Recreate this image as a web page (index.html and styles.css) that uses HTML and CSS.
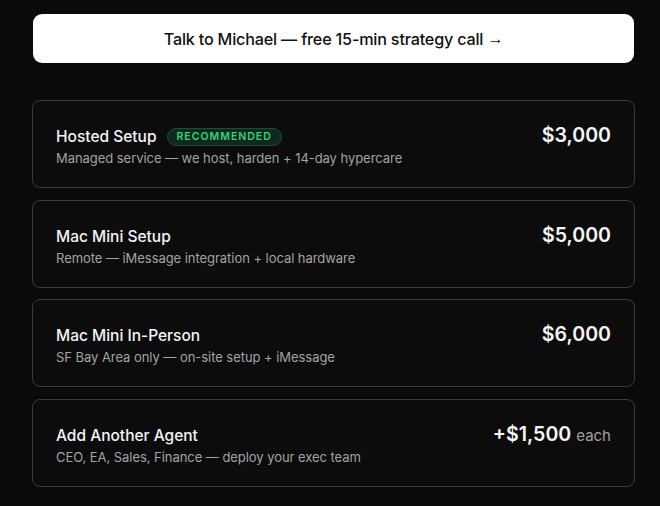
FILE: index.html
```html
<!DOCTYPE html>
<html>
<head>
<meta charset="utf-8">
<link rel="stylesheet" href="styles.css">
</head>
<body>
<main class="wrap">
  <a class="cta" href="#">Talk to Michael — free 15-min strategy call <span class="arrow">→</span></a>
  <div class="plans">
    <div class="card">
      <div class="info">
        <div class="title">Hosted Setup <span class="badge">RECOMMENDED</span></div>
        <div class="desc">Managed service — we host, harden + 14-day hypercare</div>
      </div>
      <div class="price">$3,000</div>
    </div>
    <div class="card">
      <div class="info">
        <div class="title">Mac Mini Setup</div>
        <div class="desc">Remote — iMessage integration + local hardware</div>
      </div>
      <div class="price">$5,000</div>
    </div>
    <div class="card">
      <div class="info">
        <div class="title">Mac Mini In-Person</div>
        <div class="desc">SF Bay Area only — on-site setup + iMessage</div>
      </div>
      <div class="price">$6,000</div>
    </div>
    <div class="card">
      <div class="info">
        <div class="title">Add Another Agent</div>
        <div class="desc">CEO, EA, Sales, Finance — deploy your exec team</div>
      </div>
      <div class="price">+$1,500 <span class="each">each</span></div>
    </div>
  </div>
</main>
</body>
</html>
```

FILE: styles.css
```css
* { box-sizing: border-box; }
html, body { margin: 0; padding: 0; background: #0a0a0a; }
body { font-family: Inter, "Liberation Sans", sans-serif; color: #f2f2f2; }
.wrap {
  width: 603px;
  margin-left: 32px;
  padding-top: 14px;
  display: flex;
  flex-direction: column;
}
.cta {
  display: flex;
  align-items: center;
  justify-content: center;
  height: 49px;
  margin: 0 1px;
  background: #ffffff;
  border-radius: 9px;
  color: #111;
  text-decoration: none;
  font-size: 16.2px;
  font-weight: 500;
  letter-spacing: -0.2px;
}
.arrow {
  font-family: "Liberation Sans", sans-serif;
  font-weight: 400;
  margin-left: 4px;
}
.plans {
  margin-top: 37px;
  display: flex;
  flex-direction: column;
  gap: 11.67px;
}
.card {
  height: 88px;
  border: 1px solid #3b3b3b;
  border-radius: 8px;
  background: #0c0c0c;
  padding: 25px 23px 0 23px;
  display: flex;
  justify-content: space-between;
  align-items: flex-start;
}
.title {
  font-size: 15.5px;
  font-weight: 500;
  line-height: 22px;
  color: #f4f4f4;
  display: flex;
  align-items: center;
}
.badge {
  margin-left: 10px;
  height: 18px;
  padding: 0 9px;
  border-radius: 9px;
  background: #0f2a1d;
  border: 1px solid #1f4d33;
  color: #34d27b;
  font-size: 10.5px;
  font-weight: 600;
  letter-spacing: 1px;
  line-height: 16px;
}
.desc {
  margin-top: 1px;
  font-size: 13px;
  line-height: 18px;
  color: #a3a3a3;
  letter-spacing: -0.05px;
}
.price {
  margin-top: -2px;
  font-size: 19.6px;
  font-weight: 600;
  line-height: 22px;
  color: #f6f6f6;
}
.each {
  font-size: 15px;
  font-weight: 400;
  color: #a0a0a0;
}
```
